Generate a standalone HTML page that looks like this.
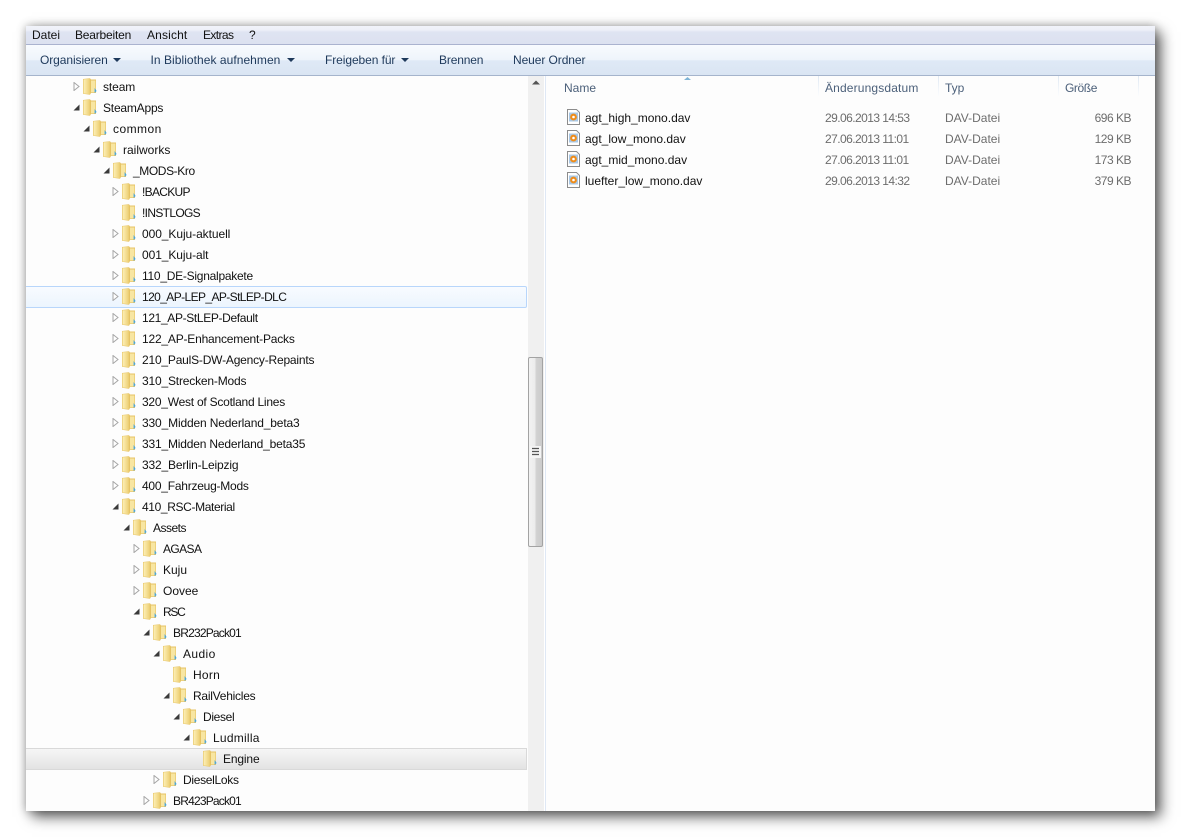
<!DOCTYPE html>
<html><head><meta charset="utf-8">
<style>
html,body{margin:0;padding:0;background:#fff;width:1181px;height:837px;overflow:hidden}
body{font:12px "Liberation Sans",sans-serif;color:#1a1a1a;position:relative}
#win{position:absolute;left:26px;top:26px;width:1129px;height:785px;background:#fdfdfd;box-shadow:6px 6px 13px rgba(0,0,0,.6),0 0 9px rgba(0,0,0,.3);overflow:hidden}
#menu{position:absolute;left:0;top:0;width:1129px;height:18px;background:linear-gradient(#f1f3fa 0,#eef0f8 4px,#dfe4f2 6px,#dce1f0 100%);border-bottom:1px solid #aab3cf}
#bar{position:absolute;left:0;top:19px;width:1129px;height:30px;background:linear-gradient(#f8fbfe 0,#eef4fb 50%,#dfe9f6 52%,#dae5f3 100%);border-bottom:1px solid #a5b4cc}
.m{position:absolute;top:2px;line-height:14px;color:#111}
.b{position:absolute;line-height:16px;color:#1e395b}
.tri{position:absolute;width:0;height:0;border:4px solid transparent;border-top:4px solid #1e395b;border-bottom:0}
.r{position:absolute;height:21px;line-height:23px;white-space:nowrap;color:#111}
.h{position:absolute;top:52px;line-height:21px;color:#4c607a}
.c{position:absolute;line-height:21px;color:#6d6d6d;white-space:nowrap}
.d{letter-spacing:-.56px}
.s{letter-spacing:-.5px}
.f{position:absolute;line-height:21px;color:#111;white-space:nowrap;left:559px}
.sep{position:absolute;top:50px;width:1px;height:20px;background:linear-gradient(#dfe8f3,#fbfcfe)}
svg.i{position:absolute;left:-20px;top:2px;width:14px;height:17px;letter-spacing:0}
svg.a{position:absolute;left:-30px;top:6px;width:7px;height:9px}
.fi{position:absolute;left:540px;width:16px;height:16px}
</style></head><body>
<svg width="0" height="0" style="position:absolute"><defs>
<linearGradient id="g" x1="0" x2="1" y1="0" y2="0"><stop offset="0" stop-color="#fdf0b8"/><stop offset="1" stop-color="#edcf74"/></linearGradient>
<symbol id="fo" viewBox="0 0 14 17"><path d="M0 1 L7 .2 L8 1.5 L13 1.5 L13 15 L8 15 L7 16.8 L0 15.8Z" fill="#e6c364"/><path d="M.6 1.4 L6.8 .8 L6.8 16.2 L.6 15.4Z" fill="url(#g)"/><path d="M8 2.5 L12.4 2.5 L12.4 14.4 L8 14.4Z" fill="#f8e6a2"/><path d="M11.6 10 L13.6 13 L11.6 15Z" fill="#4aa6dc"/></symbol>
<symbol id="op" viewBox="0 0 7 9"><path d="M1 .5 L6 4.5 L1 8.5Z" fill="#fff" stroke="#a6a6a6" stroke-width="1"/></symbol>
<symbol id="cl" viewBox="0 0 7 9"><path d="M6.5 1.5 L6.5 7.5 L.5 7.5Z" fill="#3a3a3a"/></symbol>
<symbol id="dv" viewBox="0 0 16 16"><path d="M1.5 .5 H10.5 L13.5 3.5 V15.5 H1.5Z" fill="#fff" stroke="#8c8c8c"/><rect x="3" y="3.5" width="9" height="9" fill="#a9c8e6"/><circle cx="7.5" cy="8" r="3.4" fill="#ef8c19"/><circle cx="7.5" cy="8" r="1.3" fill="#fff"/></symbol>
</defs></svg>
<div id="win">
<div id="menu">
<span class="m" style="left:6px">Datei</span><span class="m" style="left:49px;letter-spacing:-.2px">Bearbeiten</span><span class="m" style="left:121px;letter-spacing:.15px">Ansicht</span><span class="m" style="left:177px;letter-spacing:-.6px">Extras</span><span class="m" style="left:223px">?</span>
</div>
<div id="bar"></div>
<span class="b" style="left:14px;top:26px;letter-spacing:-.08px">Organisieren</span><i class="tri" style="left:87px;top:32px"></i>
<span class="b" style="left:124.5px;top:26px;letter-spacing:.05px">In Bibliothek aufnehmen</span><i class="tri" style="left:261px;top:32px"></i>
<span class="b" style="left:299px;top:26px;letter-spacing:-.08px">Freigeben für</span><i class="tri" style="left:375px;top:32px"></i>
<span class="b" style="left:413px;top:26px;letter-spacing:-.15px">Brennen</span>
<span class="b" style="left:487px;top:26px;letter-spacing:-.08px">Neuer Ordner</span>

<div style="position:absolute;left:0;top:260px;width:500px;height:20px;background:linear-gradient(#f8fbff,#ecf5fe);border:1px solid #b8d6fb;border-left:0;border-radius:0 2px 2px 0"></div>
<div style="position:absolute;left:0;top:722px;width:500px;height:20px;background:linear-gradient(#f6f6f6,#e3e3e3);border-top:1px solid #d9d9d9;border-bottom:1px solid #d9d9d9;border-right:1px solid #d9d9d9"></div>

<div class="r" style="left:77px;top:50px;letter-spacing:-.1px"><svg class="a"><use href="#op"/></svg><svg class="i"><use href="#fo"/></svg>steam</div>
<div class="r" style="left:77px;top:71px;letter-spacing:-.2px"><svg class="a"><use href="#cl"/></svg><svg class="i"><use href="#fo"/></svg>SteamApps</div>
<div class="r" style="left:87px;top:92px;letter-spacing:.45px"><svg class="a"><use href="#cl"/></svg><svg class="i"><use href="#fo"/></svg>common</div>
<div class="r" style="left:97px;top:113px"><svg class="a"><use href="#cl"/></svg><svg class="i"><use href="#fo"/></svg>railworks</div>
<div class="r" style="left:107px;top:134px;letter-spacing:-.4px"><svg class="a"><use href="#cl"/></svg><svg class="i"><use href="#fo"/></svg>_MODS-Kro</div>
<div class="r" style="left:116px;top:155px;letter-spacing:-.7px"><svg class="a"><use href="#op"/></svg><svg class="i"><use href="#fo"/></svg>!BACKUP</div>
<div class="r" style="left:116px;top:176px;letter-spacing:-.67px"><svg class="i"><use href="#fo"/></svg>!INSTLOGS</div>
<div class="r" style="left:116px;top:197px;letter-spacing:-.07px"><svg class="a"><use href="#op"/></svg><svg class="i"><use href="#fo"/></svg>000_Kuju-aktuell</div>
<div class="r" style="left:116px;top:218px;letter-spacing:-.08px"><svg class="a"><use href="#op"/></svg><svg class="i"><use href="#fo"/></svg>001_Kuju-alt</div>
<div class="r" style="left:116px;top:239px;letter-spacing:-.26px"><svg class="a"><use href="#op"/></svg><svg class="i"><use href="#fo"/></svg>110_DE-Signalpakete</div>
<div class="r" style="left:116px;top:260px;letter-spacing:-.6px"><svg class="a"><use href="#op"/></svg><svg class="i"><use href="#fo"/></svg>120_AP-LEP_AP-StLEP-DLC</div>
<div class="r" style="left:116px;top:281px;letter-spacing:-.35px"><svg class="a"><use href="#op"/></svg><svg class="i"><use href="#fo"/></svg>121_AP-StLEP-Default</div>
<div class="r" style="left:116px;top:302px;letter-spacing:-.2px"><svg class="a"><use href="#op"/></svg><svg class="i"><use href="#fo"/></svg>122_AP-Enhancement-Packs</div>
<div class="r" style="left:116px;top:323px;letter-spacing:-.2px"><svg class="a"><use href="#op"/></svg><svg class="i"><use href="#fo"/></svg>210_PaulS-DW-Agency-Repaints</div>
<div class="r" style="left:116px;top:344px;letter-spacing:-.18px"><svg class="a"><use href="#op"/></svg><svg class="i"><use href="#fo"/></svg>310_Strecken-Mods</div>
<div class="r" style="left:116px;top:365px;letter-spacing:-.24px"><svg class="a"><use href="#op"/></svg><svg class="i"><use href="#fo"/></svg>320_West of Scotland Lines</div>
<div class="r" style="left:116px;top:386px;letter-spacing:-.15px"><svg class="a"><use href="#op"/></svg><svg class="i"><use href="#fo"/></svg>330_Midden Nederland_beta3</div>
<div class="r" style="left:116px;top:407px;letter-spacing:-.18px"><svg class="a"><use href="#op"/></svg><svg class="i"><use href="#fo"/></svg>331_Midden Nederland_beta35</div>
<div class="r" style="left:116px;top:428px;letter-spacing:-.17px"><svg class="a"><use href="#op"/></svg><svg class="i"><use href="#fo"/></svg>332_Berlin-Leipzig</div>
<div class="r" style="left:116px;top:449px;letter-spacing:-.24px"><svg class="a"><use href="#op"/></svg><svg class="i"><use href="#fo"/></svg>400_Fahrzeug-Mods</div>
<div class="r" style="left:116px;top:470px;letter-spacing:-.37px"><svg class="a"><use href="#cl"/></svg><svg class="i"><use href="#fo"/></svg>410_RSC-Material</div>
<div class="r" style="left:127px;top:491px;letter-spacing:-.5px"><svg class="a"><use href="#cl"/></svg><svg class="i"><use href="#fo"/></svg>Assets</div>
<div class="r" style="left:137px;top:512px;letter-spacing:-.6px"><svg class="a"><use href="#op"/></svg><svg class="i"><use href="#fo"/></svg>AGASA</div>
<div class="r" style="left:137px;top:533px"><svg class="a"><use href="#op"/></svg><svg class="i"><use href="#fo"/></svg>Kuju</div>
<div class="r" style="left:137px;top:554px"><svg class="a"><use href="#op"/></svg><svg class="i"><use href="#fo"/></svg>Oovee</div>
<div class="r" style="left:137px;top:575px;letter-spacing:-1.3px"><svg class="a"><use href="#cl"/></svg><svg class="i"><use href="#fo"/></svg>RSC</div>
<div class="r" style="left:147px;top:596px;letter-spacing:-.8px"><svg class="a"><use href="#cl"/></svg><svg class="i"><use href="#fo"/></svg>BR232Pack01</div>
<div class="r" style="left:157px;top:617px;letter-spacing:.4px"><svg class="a"><use href="#cl"/></svg><svg class="i"><use href="#fo"/></svg>Audio</div>
<div class="r" style="left:167px;top:638px;letter-spacing:.25px"><svg class="i"><use href="#fo"/></svg>Horn</div>
<div class="r" style="left:167px;top:659px;letter-spacing:-.25px"><svg class="a"><use href="#cl"/></svg><svg class="i"><use href="#fo"/></svg>RailVehicles</div>
<div class="r" style="left:177px;top:680px;letter-spacing:-.33px"><svg class="a"><use href="#cl"/></svg><svg class="i"><use href="#fo"/></svg>Diesel</div>
<div class="r" style="left:187px;top:701px;letter-spacing:.25px"><svg class="a"><use href="#cl"/></svg><svg class="i"><use href="#fo"/></svg>Ludmilla</div>
<div class="r" style="left:197px;top:722px;letter-spacing:-.15px"><svg class="i"><use href="#fo"/></svg>Engine</div>
<div class="r" style="left:157px;top:743px;letter-spacing:-.3px"><svg class="a"><use href="#op"/></svg><svg class="i"><use href="#fo"/></svg>DieselLoks</div>
<div class="r" style="left:147px;top:764px;letter-spacing:-.8px"><svg class="a"><use href="#op"/></svg><svg class="i"><use href="#fo"/></svg>BR423Pack01</div>

<div style="position:absolute;left:502px;top:50px;width:16px;height:735px;background:#f0f0f0"></div>
<div style="position:absolute;left:518px;top:50px;width:1px;height:735px;background:#fff"></div>
<div style="position:absolute;left:519px;top:50px;width:1px;height:735px;background:#dfe8f5"></div>
<svg style="position:absolute;left:505px;top:53px" width="10" height="7"><path d="M1 5.5 L5 1.5 L9 5.5Z" fill="#555"/></svg>
<div style="position:absolute;left:502px;top:331px;width:15px;height:190px;box-sizing:border-box;border:1px solid #a3a3a3;border-radius:2px;background:linear-gradient(90deg,#f2f2f2 0,#ececec 45%,#d2d2d2 55%,#cbcbcb 100%)"></div>
<div style="position:absolute;left:504px;top:420px;width:11px;height:12px;background:#f4f4f4"></div>
<svg style="position:absolute;left:505px;top:421px" width="9" height="10"><path d="M1 1.5H8M1 4.5H8M1 7.5H8" stroke="#555" stroke-width="1.2"/></svg>

<div class="h" style="left:538px;top:52px">Name</div>
<svg style="position:absolute;left:657px;top:50px" width="10" height="5"><path d="M1 4 L4.5 1 L8 4Z" fill="#7fb4d6"/></svg>
<i class="sep" style="left:792px"></i><div class="h" style="left:799px;letter-spacing:.15px">Änderungsdatum</div>
<i class="sep" style="left:912px"></i><div class="h" style="left:919px">Typ</div>
<i class="sep" style="left:1032px"></i><div class="h" style="left:1039px;letter-spacing:-.4px">Größe</div>
<i class="sep" style="left:1112px"></i>

<svg class="fi" style="top:83px"><use href="#dv"/></svg><div class="f" style="top:82px">agt_high_mono.dav</div>
<div class="c d" style="left:799px;top:82px">29.06.2013 14:53</div><div class="c" style="left:919px;top:82px">DAV-Datei</div><div class="c s" style="right:24px;top:82px">696 KB</div>
<svg class="fi" style="top:104px"><use href="#dv"/></svg><div class="f" style="top:103px">agt_low_mono.dav</div>
<div class="c d" style="left:799px;top:103px">27.06.2013 11:01</div><div class="c" style="left:919px;top:103px">DAV-Datei</div><div class="c s" style="right:24px;top:103px">129 KB</div>
<svg class="fi" style="top:125px"><use href="#dv"/></svg><div class="f" style="top:124px">agt_mid_mono.dav</div>
<div class="c d" style="left:799px;top:124px">27.06.2013 11:01</div><div class="c" style="left:919px;top:124px">DAV-Datei</div><div class="c s" style="right:24px;top:124px">173 KB</div>
<svg class="fi" style="top:146px"><use href="#dv"/></svg><div class="f" style="top:145px">luefter_low_mono.dav</div>
<div class="c d" style="left:799px;top:145px">29.06.2013 14:32</div><div class="c" style="left:919px;top:145px">DAV-Datei</div><div class="c s" style="right:24px;top:145px">379 KB</div>
</div>
</body></html>
